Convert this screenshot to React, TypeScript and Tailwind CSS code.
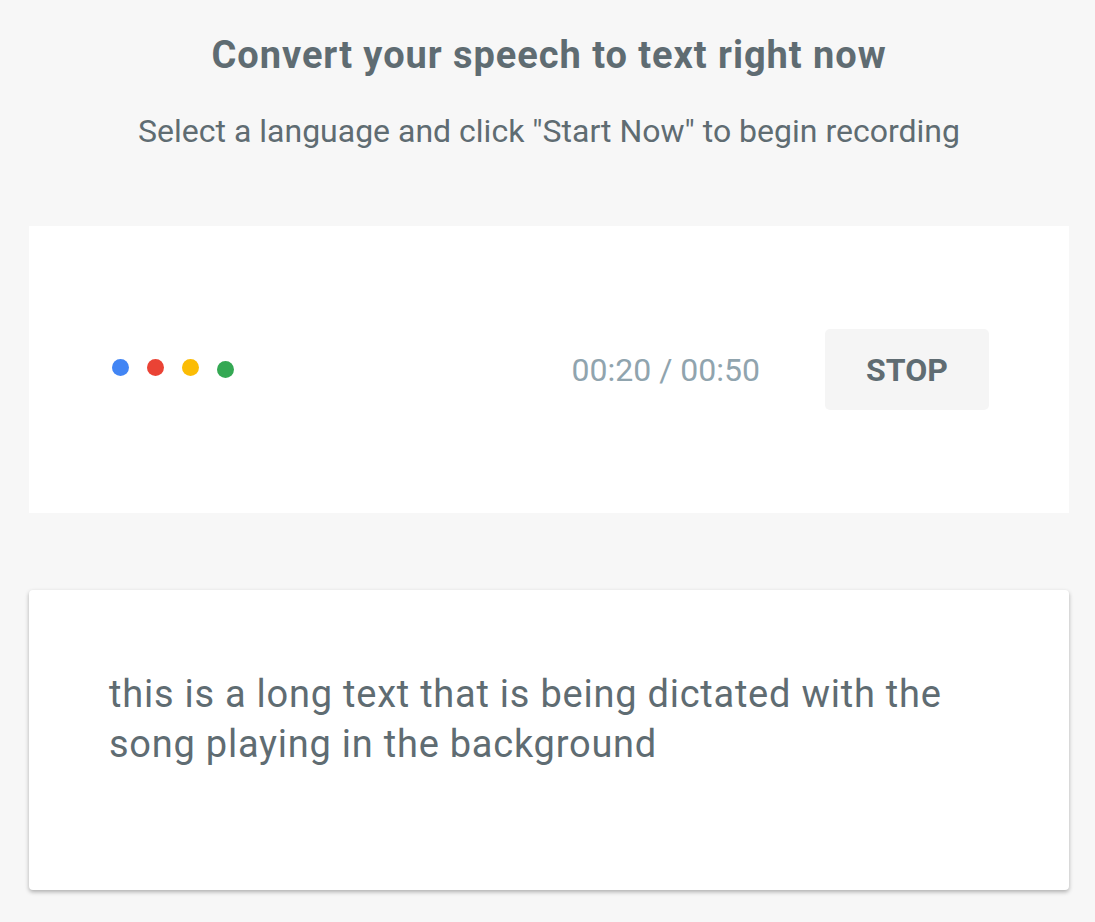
const dots = ["bg-[#4285f4]", "bg-[#ea4335]", "bg-[#fbbc05]", "bg-[#34a853]"];

export default function App() {
  return (
    <div className="min-h-[922px] bg-[#f7f7f7] font-['Roboto',sans-serif] text-[#5f6c72] pl-[29px] pr-[26px] pt-[33px]">
      {/* Header */}
      <div className="text-center">
        <h1 className="text-[38px] leading-[44px] font-bold tracking-[0.025em]">Convert your speech to text right now</h1>
        <p className="mt-[36px] text-[32px] leading-[36px]">Select a language and click "Start Now" to begin recording</p>
      </div>

      {/* Recorder */}
      <div className="mt-[77px] h-[287px] bg-white flex items-center pl-[83px] pr-[80px]">
        <div className="flex items-center gap-[18px] -mt-[4px]">
          {dots.map((c, i) => (
            <span key={i} className={`w-[17px] h-[17px] rounded-full ${c} ${i === 3 ? "mt-[3px]" : ""}`} />
          ))}
        </div>
        <div className="ml-auto text-[32px] text-[#90a4ae]">00:20 / 00:50</div>
        <button className="ml-[65px] w-[164px] h-[81px] rounded-[5px] bg-[#f5f5f5] text-[32px] font-bold text-[#5f6c72]">
          STOP
        </button>
      </div>

      {/* Transcript */}
      <div className="mt-[77px] h-[300px] bg-white rounded-[4px] shadow-[0_2px_4px_rgba(0,0,0,0.3)] px-[80px] pt-[79px]">
        <p className="text-[38px] leading-[50px] tracking-[0.02em]">
          this is a long text that is being dictated with the song playing in the background
        </p>
      </div>
    </div>
  );
}
